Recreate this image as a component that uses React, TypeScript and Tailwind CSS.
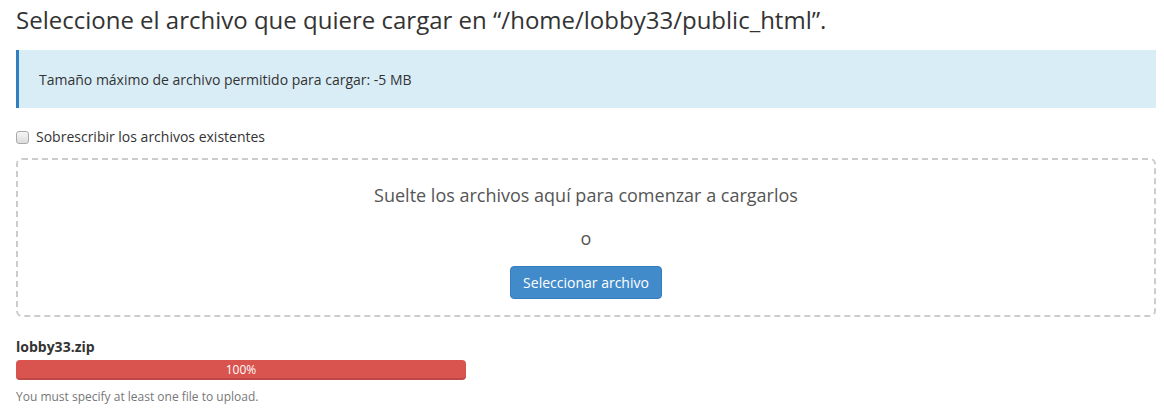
import React from "react";

export default function App() {
  return (
    <div className="w-[1164px] h-[415px] bg-white overflow-hidden text-[#333]" style={{ fontFamily: '"Open Sans", sans-serif' }}>
      <div className="w-[1140px] ml-4">
        <h1 className="text-[24px] leading-[33px] pt-[3px] font-normal text-[#333]">
          Seleccione el archivo que quiere cargar en “/home/lobby33/public_html”.
        </h1>
        <div className="mt-[14px] h-[58px] bg-[#d9edf7] border-l-[3px] border-[#2f7fc1] flex items-center pl-5 text-[14px] leading-[20px] text-[#333]">
          <span className="mt-[2px]">Tamaño máximo de archivo permitido para cargar: -5 MB</span>
        </div>
        <label className="mt-[19px] flex items-center gap-[7px] text-[14px] leading-[20px] text-[#333]">
          <span className="w-[13px] h-[13px] rounded-[3px] border border-[#a9a9a9] bg-gradient-to-b from-[#f6f6f6] to-[#dcdcdc]"></span>
          Sobrescribir los archivos existentes
        </label>
        <div className="mt-[11px] h-[159px] border-2 border-dashed border-[#cccccc] rounded-[6px] flex flex-col items-center">
          <div className="mt-[22px] text-[18px] leading-[26px] text-[#555]">
            Suelte los archivos aquí para comenzar a cargarlos
          </div>
          <div className="mt-[17px] text-[18px] leading-[26px] text-[#555]">o</div>
          <button className="mt-[15px] h-[33px] px-[12px] bg-[#428bca] border border-[#357ebd] rounded-[4px] text-white text-[14px] leading-[20px]">
            Seleccionar archivo
          </button>
        </div>
        <div className="mt-[20px] text-[14px] leading-[20px] font-bold text-[#333]">lobby33.zip</div>
        <div className="mt-[3px] w-[450px] h-[20px] rounded-[4px] bg-[#d9534f] shadow-[inset_0_-2px_0_rgba(0,0,0,0.12)] flex items-center justify-center text-white text-[12px] leading-[20px]">
          100%
        </div>
        <div className="mt-[8px] text-[12px] leading-[18px] text-[#777]">
          You must specify at least one file to upload.
        </div>
      </div>
    </div>
  );
}
